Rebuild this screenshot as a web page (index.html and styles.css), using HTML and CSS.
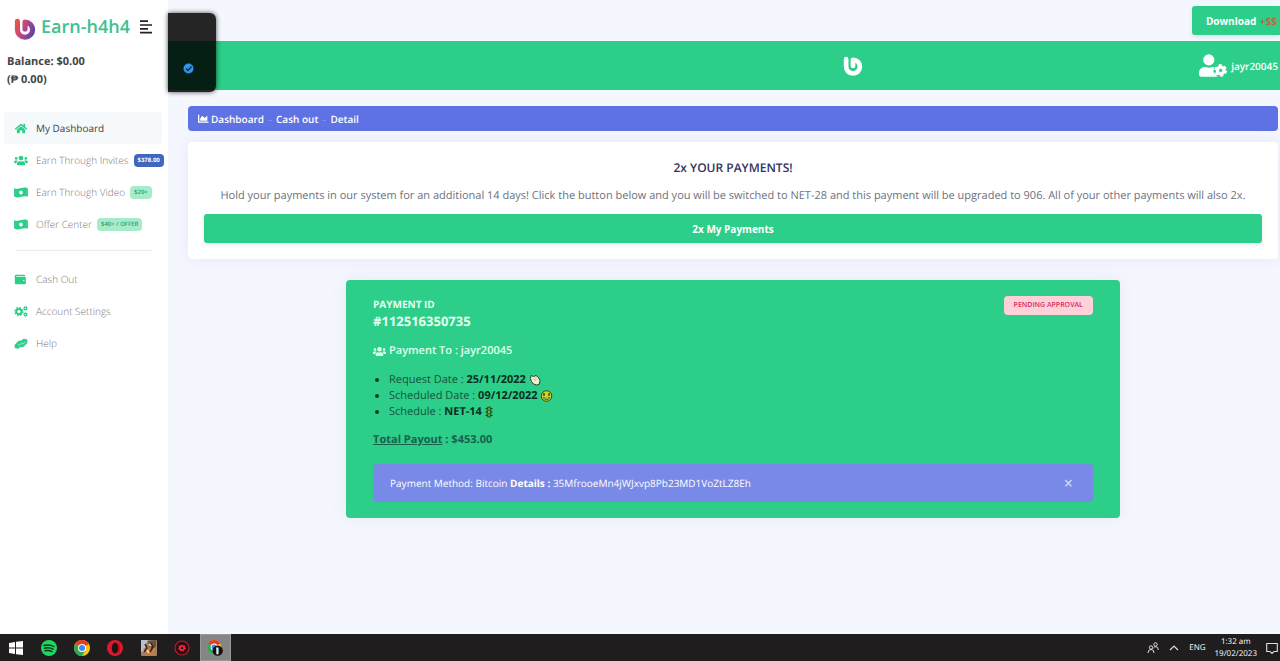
FILE: index.html
```html
<!DOCTYPE html>
<html lang="en">
<head>
    <meta charset="UTF-8">
    <meta name="viewport" content="width=device-width, initial-scale=1.0">
    <title>Earn-h4h4 | Payment Detail</title>
    <link rel="stylesheet" href="styles.css">
</head>
<body>

<svg class="sprite" aria-hidden="true">
    <symbol id="users" viewBox="0 0 640 512"><path d="M96 224a64 64 0 1 0 0-128 64 64 0 0 0 0 128zm448 0a64 64 0 1 0 0-128 64 64 0 0 0 0 128zm32 32h-64c-18 0-34 7-45 19 40 22 69 62 75 109h66c18 0 32-14 32-32v-32c0-35-29-64-64-64zm-256 0a112 112 0 1 0 0-224 112 112 0 0 0 0 224zm77 32h-8c-42 20-96 20-138 0h-8c-64 0-115 52-115 115v29c0 27 21 48 48 48h288c27 0 48-21 48-48v-29c0-63-51-115-115-115zm-224-13c-11-12-27-19-45-19H64c-35 0-64 29-64 64v32c0 18 14 32 32 32h66c6-47 35-87 75-109z"/></symbol>
    <symbol id="money" viewBox="0 0 640 512"><path fill-rule="evenodd" d="M622 54C422-35 219 150 17 61 8 57 0 65 0 75v340c0 19 11 37 28 44 199 88 402-98 605-8 5-2 7-7 7-14V97c0-18-3-36-18-43zM320 352c-44 0-80-43-80-96s36-96 80-96 80 43 80 96-36 96-80 96z"/></symbol>
</svg>

<div class="app">
    <aside class="sidebar">
        <div class="brand">
            <svg class="brand-logo" viewBox="0 0 32 32" aria-hidden="true">
                <defs>
                    <linearGradient id="logoFill" gradientUnits="userSpaceOnUse" x1="3" y1="6" x2="29" y2="18">
                        <stop offset="0" stop-color="#e8543f"/>
                        <stop offset=".45" stop-color="#c04a80"/>
                        <stop offset="1" stop-color="#6a3fa8"/>
                    </linearGradient>
                </defs>
                <path d="M5 5v12a11 11 0 1 0 11-11v10" fill="none" stroke="url(#logoFill)" stroke-width="7.5" stroke-linecap="round" stroke-linejoin="round"/>
            </svg>
            <a class="brand-name" href="#">Earn-h4h4</a>
            <button class="menu-toggle" type="button" aria-label="Toggle menu">
                <svg viewBox="0 0 12 14" aria-hidden="true"><path d="M0 1.2h8M0 5h12M0 8.8h8M0 12.6h12" stroke="#222" stroke-width="1.7"/></svg>
            </button>
        </div>
        <div class="balance">
            <p>Balance: $0.00</p>
            <p>(₱ 0.00)</p>
        </div>
        <nav class="menu">
            <a class="menu-item active" href="#">
                <svg viewBox="0 0 576 512"><path d="M288 150 96 308v156c0 9 7 16 16 16h116V352h120v128h116c9 0 16-7 16-16V308zm280 106-88-72V44c0-7-5-12-12-12h-56c-7 0-12 5-12 12v73l-90-74c-13-11-31-11-44 0L8 256c-6 5-7 13-2 19l25 31c5 5 12 6 18 1L288 111l239 196c5 5 13 4 18-1l25-31c5-6 4-14-2-19z"/></svg>
                <span>My Dashboard</span>
            </a>
            <a class="menu-item" href="#">
                <svg><use href="#users"/></svg>
                <span>Earn Through Invites</span>
                <span class="tag tag-blue">$378.00</span>
            </a>
            <a class="menu-item" href="#">
                <svg><use href="#money"/></svg>
                <span>Earn Through Video</span>
                <span class="tag">$20+</span>
            </a>
            <a class="menu-item" href="#">
                <svg><use href="#money"/></svg>
                <span>Offer Center</span>
                <span class="tag">$40+ / OFFER</span>
            </a>
        </nav>
        <hr class="divider">
        <nav class="menu">
            <a class="menu-item" href="#">
                <svg viewBox="0 0 576 512"><path d="M461 128H80c-9 0-16-7-16-16s7-16 16-16h384c9 0 16-7 16-16 0-27-21-48-48-48H64C29 32 0 61 0 96v320c0 35 29 64 64 64h397c28 0 51-22 51-48V176c0-26-23-48-51-48zm-45 208a32 32 0 1 1 0-64 32 32 0 0 1 0 64z"/></svg>
                <span>Cash Out</span>
            </a>
            <a class="menu-item" href="#">
                <svg viewBox="0 0 40 32">
                    <circle cx="14" cy="16" r="7.5" fill="none" stroke="#2dce89" stroke-width="6"/>
                    <circle cx="14" cy="16" r="11.5" fill="none" stroke="#2dce89" stroke-width="4" stroke-dasharray="5 4"/>
                    <circle cx="33" cy="7" r="4" fill="none" stroke="#2dce89" stroke-width="4"/>
                    <circle cx="33" cy="25" r="4" fill="none" stroke="#2dce89" stroke-width="4"/>
                </svg>
                <span>Account Settings</span>
            </a>
            <a class="menu-item" href="#">
                <svg viewBox="0 0 40 32">
                    <path d="M1 20 13 8l8-1 6-5 12 2-1 11-12 12-8-1-6 5-10-2z"/>
                    <path d="m11 18 4 4 7-7 4 3 6-7" fill="none" stroke="#fff" stroke-width="1.6"/>
                </svg>
                <span>Help</span>
            </a>
        </nav>
    </aside>

    <main class="main">
        <div class="floating-box">
            <svg viewBox="0 0 22 22" aria-hidden="true"><circle cx="11" cy="11" r="10" fill="#3295ea"/><path d="m6 11 4 4 7-8" fill="none" stroke="#0d2b3a" stroke-width="2.6"/></svg>
        </div>
        <div class="topbar">
            <button class="btn download" type="button">Download <span class="bonus">+$$</span></button>
        </div>
        <header class="navbar">
            <svg class="nav-logo" viewBox="0 0 32 32" aria-hidden="true"><path d="M5 5v12a11 11 0 1 0 11-11v10" fill="none" stroke="#fff" stroke-width="7.5" stroke-linecap="round" stroke-linejoin="round"/></svg>
            <a class="user" href="#">
                <svg viewBox="0 0 640 512" aria-hidden="true">
                    <path d="M224 256a128 128 0 1 0 0-256 128 128 0 0 0 0 256zm96 36-6-4h-17a174 174 0 0 1-146 0h-17C60 288 0 348 0 422v42c0 27 21 48 48 48h352c9 0 17-2 24-6l-36-31v-24l-40-24-26-48 28-26-2-30 6-25z"/>
                    <circle cx="496" cy="368" r="76" fill="none" stroke="#fff" stroke-width="76"/>
                    <circle cx="496" cy="368" r="124" fill="none" stroke="#fff" stroke-width="40" stroke-dasharray="72 58"/>
                </svg>
                <span>jayr20045</span>
            </a>
        </header>

        <div class="content">
            <nav class="breadcrumb">
                <a href="#"><svg viewBox="0 0 20 16" aria-hidden="true"><path d="M1.2 1v13.5H19" fill="none" stroke="#fff" stroke-width="2.4"/><path d="M4 12V8l4-5 4 4 5-4v9z"/></svg>Dashboard</a>
                <span class="sep">-</span>
                <a href="#">Cash out</a>
                <span class="sep">-</span>
                <a href="#">Detail</a>
            </nav>

            <section class="card">
                <h1>2x YOUR PAYMENTS!</h1>
                <p>Hold your payments in our system for an additional 14 days! Click the button below and you will be switched to NET-28 and this payment will be upgraded to 906. All of your other payments will also 2x.</p>
                <button class="btn wide" type="button">2x My Payments</button>
            </section>

            <section class="payment">
                <div class="payment-head">
                    <div>
                        <h2>PAYMENT ID</h2>
                        <p class="payment-id">#112516350735</p>
                    </div>
                    <span class="status">PENDING APPROVAL</span>
                </div>
                <p class="payment-to"><svg aria-hidden="true"><use href="#users"/></svg>Payment To : jayr20045</p>
                <ul>
                    <li>Request Date : <b>25/11/2022</b>
                        <svg viewBox="0 0 24 24" aria-hidden="true"><path d="m3 3 5 2 5-2 5 4 3 6-1 7-6 2-6-2-4-5-2-6z" fill="#f3efd2" stroke="#22452b" stroke-width="2"/><path d="m8 9 5 5m-2-7 4 4M2 17l4 5" stroke="#8b9a72" stroke-width="1.4"/></svg>
                    </li>
                    <li>Scheduled Date : <b>09/12/2022</b>
                        <svg viewBox="0 0 26 24" aria-hidden="true"><circle cx="13" cy="12" r="10.5" fill="#d8d329" stroke="#234d16" stroke-width="2"/><path d="M8 6v6m10-6v6" stroke="#285618" stroke-width="3"/><path d="M6 14h14q-1 6-7 6t-7-6" fill="#38761e"/><path d="M9 16h8" stroke="#eef3cf" stroke-width="2"/></svg>
                    </li>
                    <li>Schedule : <b>NET-14</b>
                        <svg class="slim" viewBox="0 0 16 24" aria-hidden="true"><rect x="3" y="1" width="10" height="22" rx="4" fill="#236b24"/><path d="M1 5h14M1 12h14M1 19h14" stroke="#174b1b" stroke-width="2"/><circle cx="8" cy="6" r="2.5" fill="#6a9a35"/><circle cx="8" cy="12" r="2.5" fill="#8cae36"/><circle cx="8" cy="18" r="2.5" fill="#35b350"/></svg>
                    </li>
                </ul>
                <p class="total"><u>Total Payout</u> : $453.00</p>
                <div class="alert">
                    <span>Payment Method: Bitcoin <b>Details :</b> 35MfrooeMn4jWJxvp8Pb23MD1VoZtLZ8Eh</span>
                    <button class="close" type="button" aria-label="Close">×</button>
                </div>
            </section>
        </div>
    </main>
</div>

<footer class="taskbar">
    <div class="apps">
        <button type="button" aria-label="Start"><svg viewBox="0 0 16 16"><path d="m1 3 6-1v5.500H1zm7-1.200L15 1v6.500H8zM1 8.500h6V14l-6-1zm7 0h7V15l-7-.8z" fill="#fff"/></svg></button>
        <button type="button" aria-label="Spotify"><svg viewBox="0 0 16 16"><circle cx="8" cy="8" r="8" fill="#1ed760"/><path d="M3 5.500q5.500-1.500 10 1M3.500 8.200q5-1.300 8.500 1M4 10.800q4-1 7 .8" fill="none" stroke="#12331d" stroke-width="1.400" stroke-linecap="round"/></svg></button>
        <button type="button" aria-label="Chrome"><svg viewBox="0 0 16 16"><g id="chrome"><circle cx="8" cy="8" r="8" fill="#fbc816"/><path d="M8 8 1.100 4A8 8 0 0 1 14.900 4z" fill="#e33b2e"/><path d="M8 8 1.100 4A8 8 0 0 0 8 16l3.500-6z" fill="#2da94f"/><circle cx="8" cy="8" r="4" fill="#fff"/><circle cx="8" cy="8" r="3" fill="#4285f4"/></g></svg></button>
        <button type="button" aria-label="Opera"><svg viewBox="0 0 16 16"><circle cx="8" cy="8" r="8" fill="#e0182d"/><ellipse cx="8" cy="8" rx="3.300" ry="5.600" fill="#1d1314"/><path d="M10 2.500a8 8 0 0 1 0 11q3-1 3-5.500t-3-5.500" fill="#9c1220"/></svg></button>
        <button type="button" aria-label="Game"><svg viewBox="0 0 16 16"><rect width="16" height="16" rx="1" fill="#9d8068"/><path d="M0 0h7L4 6l3 4-7 2z" fill="#b7c1cb"/><path d="m7 1 8-1v7l-4 2-3-3z" fill="#6d503d"/><path d="m2 9 5-3 2 4 6-3-2 8H5z" fill="#c87c3e"/><path d="m4 4 2 4-3 4m7-9 2 4-3 5" fill="none" stroke="#34271f" stroke-width="1.500"/><path d="m8 4 2 2m-4 4 2 3" stroke="#f1dfc5" stroke-width="1.500"/></svg></button>
        <button type="button" aria-label="Recorder"><svg viewBox="0 0 16 16"><circle cx="8" cy="8" r="7" fill="#2c0d11" stroke="#b52031" stroke-width="1.200"/><path d="m8 4.500 1.200 1 2 0-.2 1.800L12 9l-1.800.7-.6 1.800-1.600-.8-1.600.8-.6-1.800L4 9l1-1.700-.2-1.800h2z" fill="#ec2940"/><circle cx="8" cy="8" r="1.300" fill="#2c0d11"/></svg></button>
        <button class="current" type="button" aria-label="Chrome window"><svg viewBox="0 0 18 18"><use href="#chrome"/><circle cx="12" cy="12" r="5.800" fill="#111"/><path d="M10 8.500h3V16h-2.500V10z" fill="#e6f1f5"/></svg></button>
    </div>
    <div class="tray">
        <svg viewBox="0 0 12 12" aria-hidden="true"><g fill="none" stroke="#ddd" stroke-width="1"><circle cx="4" cy="5.500" r="1.700"/><path d="M1 11q0-3.500 3-3.500T7 11"/><circle cx="8.500" cy="2.500" r="1.700"/><path d="M6.500 6q1-1.500 2.500-1.300Q11.300 5 11.300 8"/></g></svg>
        <svg viewBox="0 0 12 12" aria-hidden="true"><path d="m2 8 4-4 4 4" fill="none" stroke="#ddd" stroke-width="1.200"/></svg>
        <span>ENG</span>
        <div class="clock"><div>1:32 am</div><div>19/02/2023</div></div>
        <svg viewBox="0 0 12 12" aria-hidden="true"><path d="M.7 1.500h10.600v8H8L6 11.500 4 9.500H.7z" fill="none" stroke="#ddd" stroke-width="1.100"/></svg>
    </div>
</footer>

</body>
</html>
```
FILE: styles.css
```css
* {
    box-sizing: border-box;
}
body {
    display: flex;
    flex-direction: column;
    min-height: 100vh;
    margin: 0;
    background-color: #f5f7ff;
    color: #525f7f;
    font-family: "Open Sans", sans-serif;
    font-size: 11px;
    line-height: 16px;
    text-rendering: geometricPrecision;
}
h1, h2, p, ul {
    margin: 0;
}
a {
    color: inherit;
    text-decoration: none;
}
button {
    font-family: inherit;
    border: 0;
    padding: 0;
    background: none;
    cursor: pointer;
}
svg {
    flex-shrink: 0;
}
.sprite {
    position: absolute;
    width: 0;
    height: 0;
}
.app {
    display: flex;
    flex: 1;
}

/* sidebar */
.sidebar {
    width: 168px;
    flex-shrink: 0;
    background-color: #fff;
}
.brand {
    display: flex;
    align-items: center;
    height: 53px;
    padding-left: 14px;
}
.brand-logo {
    width: 22px;
    height: 22px;
    margin-top: 4px;
    overflow: visible;
}
.brand-name {
    margin-left: 5px;
    color: #3fc190;
    font-size: 18px;
    font-weight: 600;
}
.menu-toggle {
    width: 12px;
    height: 14px;
    margin-left: 10px;
}
.menu-toggle svg {
    display: block;
}
.balance {
    padding-left: 7px;
    color: #444;
    font-weight: 700;
    line-height: 18px;
}
.balance + .menu {
    margin-top: 23px;
}
.menu {
    display: flex;
    flex-direction: column;
    padding: 0 6px 0 4px;
}
.menu-item {
    display: flex;
    align-items: center;
    height: 32px;
    padding-left: 10px;
    color: #777;
    font-size: 10px;
    font-weight: 300;
    white-space: nowrap;
}
.menu-item svg {
    width: 14px;
    height: 11px;
    margin-right: 8px;
    fill: #2dce89;
}
.menu-item.active {
    background-color: #f6f9fc;
    border-radius: 4px;
    color: #444;
    font-weight: 400;
}
.tag {
    margin-left: 5px;
    padding: 0 4px;
    border-radius: 4px;
    background-color: #a5edca;
    color: #2f9d70;
    font-size: 6px;
    font-weight: 600;
    line-height: 13px;
}
.tag-blue {
    background-color: #4067bd;
    color: #fff;
    font-weight: 700;
}
.divider {
    margin: 10px 16px 12px;
    border: 0;
    border-top: 1px solid #e9ecef;
}

/* top of the page */
.main {
    position: relative;
    flex: 1;
    min-width: 0;
}
.floating-box {
    position: absolute;
    top: 13px;
    left: 0;
    width: 48px;
    height: 79px;
    padding: 50px 0 0 15px;
    border-radius: 0 6px 6px 0;
    background-color: rgba(0, 0, 0, 0.85);
    box-shadow: 0 0 5px rgba(0, 0, 0, 0.7);
}
.floating-box svg {
    display: block;
    width: 11px;
    height: 11px;
}
.topbar {
    display: flex;
    justify-content: flex-end;
    height: 41px;
    padding-top: 6px;
}
.btn {
    height: 29px;
    border-radius: 3px;
    background-color: #2dce89;
    color: #fff;
    font-size: 10px;
    font-weight: 700;
    box-shadow: 0 2px 4px rgba(50, 50, 93, 0.12);
}
.download {
    padding: 0 3px 0 14px;
    border-radius: 3px 0 0 3px;
}
.bonus {
    margin-left: 1px;
    color: #b3703e;
}
.navbar {
    display: grid;
    grid-template-columns: 1fr auto 1fr;
    align-items: center;
    height: 49px;
    padding: 0 2px 0 260px;
    background-color: #2dce89;
}
.nav-logo {
    grid-column: 2;
    width: 20px;
    height: 20px;
    overflow: visible;
}
.user {
    display: flex;
    align-items: center;
    justify-self: end;
    gap: 4px;
    color: #fff;
    font-size: 10px;
    font-weight: 600;
}
.user svg {
    width: 28px;
    height: 23px;
    fill: #fff;
}

/* page content */
.content {
    padding: 16px 2px 0 20px;
}
.breadcrumb {
    display: flex;
    align-items: center;
    height: 25px;
    padding: 0 10px;
    border-radius: 4px;
    background-color: #5e72e4;
    color: #fff;
    font-size: 10px;
    font-weight: 600;
}
.breadcrumb svg {
    width: 11px;
    height: 9px;
    margin-right: 2px;
    fill: #fff;
}
.sep {
    width: 12px;
    color: #8d9cf0;
    text-align: center;
}
.card {
    margin-top: 11px;
    padding: 16px;
    border-radius: 4px;
    background-color: #fff;
    box-shadow: 0 0 16px rgba(136, 152, 170, 0.15);
    text-align: center;
}
.card h1 {
    color: #32325d;
    font-size: 12px;
    font-weight: 600;
    line-height: 20px;
}
.card p {
    margin: 10px 0;
    color: #6d7180;
}
.wide {
    display: block;
    width: 100%;
}
.payment {
    width: 71%;
    margin: 21px auto 0;
    padding: 16px 27px;
    border-radius: 4px;
    background-color: #2dce89;
    box-shadow: 0 0 16px rgba(136, 152, 170, 0.15);
}
.payment-head {
    display: flex;
    justify-content: space-between;
    align-items: flex-start;
    color: #e4fff2;
}
.payment h2 {
    font-size: 10px;
    font-weight: 700;
    line-height: 16px;
}
.payment-id {
    font-size: 13px;
    font-weight: 700;
    line-height: 18px;
}
.status {
    padding: 0 10px;
    border-radius: 4px;
    background-color: #fdd1da;
    color: #d72b5a;
    font-size: 7px;
    font-weight: 600;
    line-height: 19px;
}
.payment-to {
    display: flex;
    align-items: center;
    gap: 3px;
    margin-top: 13px;
    color: #e4fff2;
    font-weight: 600;
}
.payment-to svg {
    width: 13px;
    height: 11px;
    fill: #e4fff2;
}
.payment ul {
    margin-top: 13px;
    padding-left: 16px;
    color: #125438;
}
.payment li::marker {
    color: #083c25;
}
.payment li b {
    color: #08301d;
}
.payment li svg {
    width: 13px;
    height: 12px;
    vertical-align: middle;
}
.payment li .slim {
    width: 8px;
}
.total {
    margin-top: 12px;
    color: #17624a;
    font-weight: 700;
}
.alert {
    display: flex;
    align-items: center;
    justify-content: space-between;
    height: 38px;
    margin-top: 16px;
    padding: 0 20px 0 17px;
    border-radius: 4px;
    background-color: #7889e8;
    color: #fff;
    font-size: 10px;
}
.close {
    color: #c9d2fa;
    font-size: 16px;
    font-weight: 600;
}

/* taskbar */
.taskbar {
    display: flex;
    justify-content: space-between;
    height: 27px;
    background-color: #1f1d1e;
    color: #fff;
}
.apps {
    display: flex;
    justify-content: space-between;
    width: 231px;
}
.apps button {
    display: flex;
    align-items: center;
    justify-content: center;
    width: 31px;
}
.apps svg {
    width: 16px;
    height: 16px;
}
.apps .current {
    background-color: #858585;
    border: 1px solid #999;
}
.tray {
    display: flex;
    align-items: center;
    gap: 9px;
    padding-right: 2px;
    font-size: 8px;
}
.tray svg {
    width: 12px;
    height: 12px;
}
.clock {
    line-height: 12px;
    text-align: center;
}
```
